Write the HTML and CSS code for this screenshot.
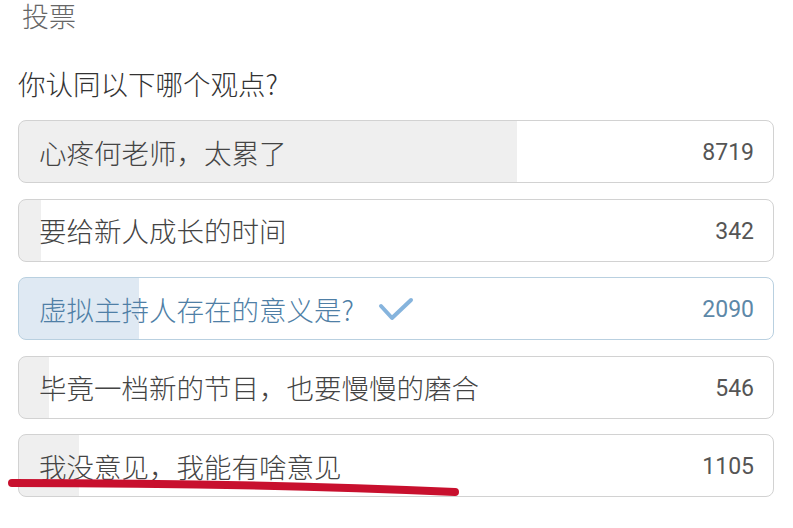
FILE: index.html
```html
<html>
<head>
    <meta charset="utf-8">
    <title>投票</title>
    <link rel="stylesheet" href="styles.css">
</head>

<body>
    <div class="page">
        <div class="title">投票</div>
        <div class="question">你认同以下哪个观点?</div>
        <div class="options">
            <div class="option" style="--pct: 66%">
                <span class="label">心疼何老师，太累了</span>
                <span class="count">8719</span>
            </div>
            <div class="option" style="--pct: 2.9%">
                <span class="label">要给新人成长的时间</span>
                <span class="count">342</span>
            </div>
            <div class="option selected" style="--pct: 15.9%">
                <span class="label">虚拟主持人存在的意义是?</span>
                <svg class="check" width="36" height="26" viewBox="0 0 36 26">
                    <polyline points="3,9 14,21 33,3" />
                </svg>
                <span class="count">2090</span>
            </div>
            <div class="option" style="--pct: 4%">
                <span class="label">毕竟一档新的节目，也要慢慢的磨合</span>
                <span class="count">546</span>
            </div>
            <div class="option" style="--pct: 7.9%">
                <span class="label">我没意见，我能有啥意见</span>
                <span class="count">1105</span>
            </div>
        </div>
    </div>

    <!-- hand-drawn red underline over the last option -->
    <svg class="scribble" width="793" height="528" viewBox="0 0 793 528">
        <path d="M12 483 C 150 483, 320 486, 455 492" />
    </svg>
</body>

</html>
```

FILE: styles.css
```css
body {
    margin: 0;
    background-color: #ffffff;
    font-family: "Noto Sans CJK SC", "Noto Sans", sans-serif;
    font-weight: 300;
    position: relative;
}

.page {
    padding: 0 19px 0 18px;
}

.title {
    font-size: 27px;
    line-height: 30px;
    color: #666666;
    margin: 1px 0 0 4px;
}

.question {
    font-size: 27.5px;
    line-height: 30px;
    color: #333333;
    margin-top: 37px;
}

.options {
    margin-top: 22px;
}

.option {
    display: flex;
    align-items: center;
    margin-bottom: 15.5px;
    padding: 2px 19px 0 20px;
    box-sizing: border-box;
    height: 63px;
    border: 1px solid #d2d2d2;
    border-radius: 8px;
    background: linear-gradient(to right, #efefef var(--pct), #ffffff var(--pct));
}

.label {
    font-size: 27.5px;
    line-height: 1;
    color: #444444;
}

.count {
    margin-left: auto;
    font-family: Roboto, "Liberation Sans", sans-serif;
    font-weight: 400;
    font-size: 23px;
    line-height: 1;
    color: #555555;
}

.selected {
    border-color: #b9d0e0;
    background: linear-gradient(to right, #dfe9f3 var(--pct), #ffffff var(--pct));
}

.selected .label {
    color: #4f7fa6;
}

.selected .count {
    color: #5d88a8;
}

.check {
    margin-left: 24px;
    margin-top: 1px;
}

.check polyline {
    fill: none;
    stroke: #86b4dd;
    stroke-width: 4;
    stroke-linecap: round;
    stroke-linejoin: round;
}

.scribble {
    position: absolute;
    left: 0;
    top: 0;
    pointer-events: none;
}

.scribble path {
    fill: none;
    stroke: #c8102e;
    stroke-width: 8;
    stroke-linecap: round;
}
```
